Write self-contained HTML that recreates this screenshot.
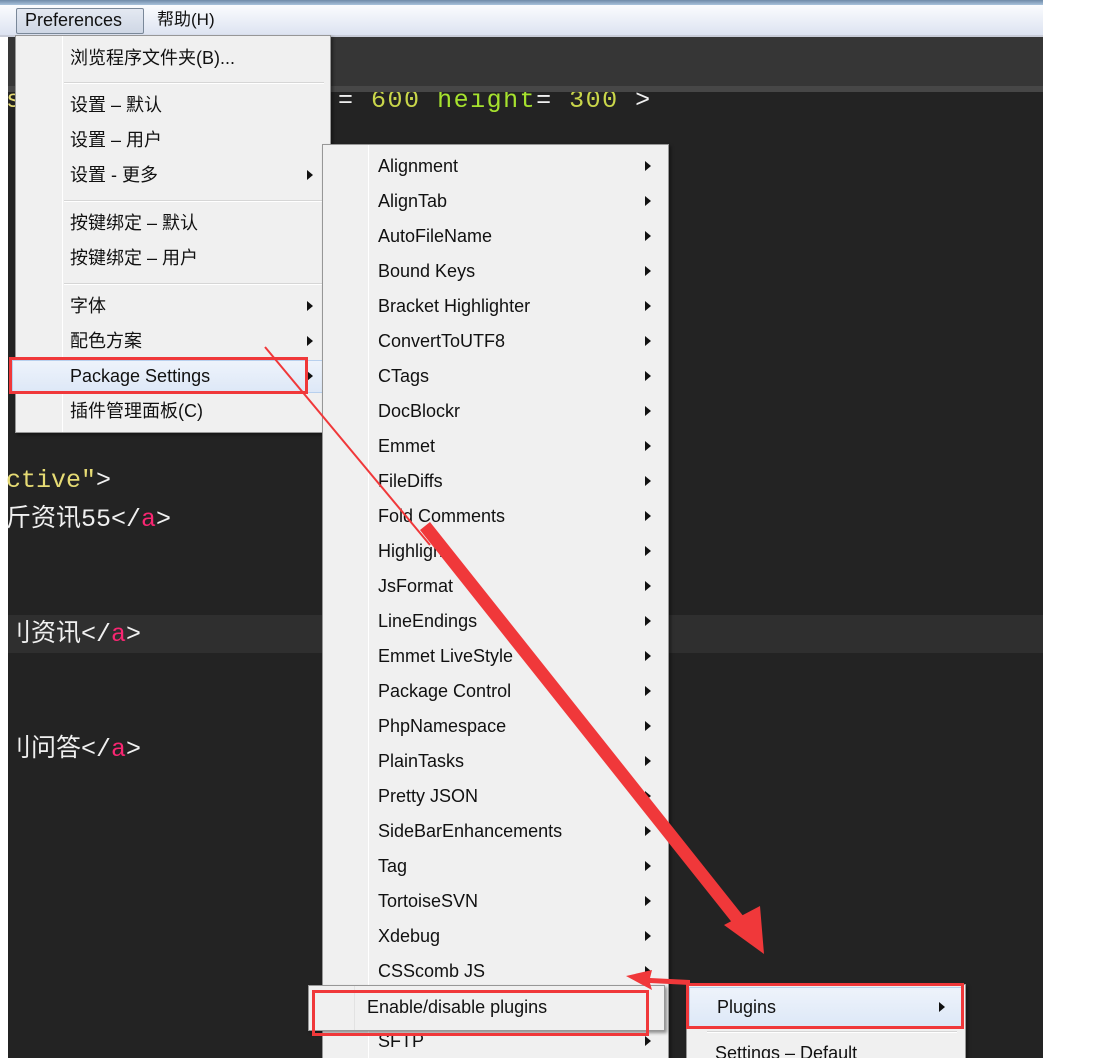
<!DOCTYPE html>
<html style="overflow:hidden;width:1098px;height:1058px"><head><meta charset="utf-8"><style>
*{margin:0;padding:0;box-sizing:border-box}
body{width:1098px;height:1058px;position:relative;overflow:hidden;background:#fff;font-family:"Liberation Sans","Noto Sans CJK SC",sans-serif}
.abs{position:absolute}
.menu{position:absolute;background:#f0f0f0;border:1px solid #979797;box-shadow:2px 2px 3px rgba(0,0,0,.4)}
.it{position:absolute;font-size:18px;color:#111;white-space:nowrap;line-height:20px}
.ar{position:absolute;width:0;height:0;border-left:6px solid #111;border-top:5px solid transparent;border-bottom:5px solid transparent}
.sep{position:absolute;height:2px;border-top:1px solid #d6d6d6;border-bottom:1px solid #fff}
.code{position:absolute;font-family:"Liberation Mono","Noto Sans CJK SC",monospace;font-size:25px;color:#f0f0f0;white-space:nowrap;line-height:30px}
.rb{position:absolute;border:3px solid #f0383a}
</style></head><body>
<div class="abs" style="left:0;top:0;width:1043px;height:5px;background:linear-gradient(#6f8aa8,#a9c3dc)"></div>
<div class="abs" style="left:0;top:5px;width:1043px;height:32px;background:linear-gradient(#fbfcfe,#dde3f1);border-bottom:2px solid #c8ccd8"></div>
<div class="abs" style="left:16px;top:8px;width:128px;height:26px;border:1px solid #7a8899;border-radius:2px;background:linear-gradient(#e4e9f2,#cfd7e5)"></div>
<div class="it" style="left:25px;top:10px;font-size:18px">Preferences</div>
<div class="it" style="left:157px;top:10px;font-size:17px">帮助(H)</div>
<div class="abs" style="left:8px;top:37px;width:1035px;height:50px;background:#363636"></div>
<div class="abs" style="left:8px;top:92px;width:1035px;height:966px;background:#232323"></div>
<div class="abs" style="left:8px;top:615px;width:1035px;height:38px;background:#2f2f2f"></div>
<div class="code" style="left:6px;top:86px;color:#e6db74">s</div>
<div class="code" style="left:338px;top:86px;letter-spacing:1.5px"><span>=</span> <span style="color:#c9d64a">600</span>  <span style="color:#a6e22e">height</span>= <span style="color:#c9d64a">300</span> &gt;</div>
<div class="abs" style="left:8px;top:86px;width:1035px;height:6px;background:#474747"></div>
<div class="code" style="left:6px;top:466px"><span style="color:#e6db74">ctive"</span>&gt;</div>
<div class="code" style="left:6px;top:505px">斤资讯55&lt;/<span style="color:#f92672">a</span>&gt;</div>
<div class="code" style="left:6px;top:620px">刂资讯&lt;/<span style="color:#f92672">a</span>&gt;</div>
<div class="code" style="left:6px;top:735px">刂问答&lt;/<span style="color:#f92672">a</span>&gt;</div>

<div class="menu" style="left:15px;top:35px;width:316px;height:398px">
 <div class="abs" style="left:46px;top:0;width:1px;height:396px;background:#e2e2e2;border-right:1px solid #fff"></div>
 <div class="it" style="left:54px;top:12px">浏览程序文件夹(B)...</div>
 <div class="sep" style="left:48px;top:46px;width:260px"></div>
 <div class="it" style="left:54px;top:59px">设置 – 默认</div>
 <div class="it" style="left:54px;top:94px">设置 – 用户</div>
 <div class="it" style="left:54px;top:129px">设置 - 更多</div><div class="ar" style="left:291px;top:134px"></div>
 <div class="sep" style="left:48px;top:164px;width:260px"></div>
 <div class="it" style="left:54px;top:177px">按键绑定 – 默认</div>
 <div class="it" style="left:54px;top:212px">按键绑定 – 用户</div>
 <div class="sep" style="left:48px;top:247px;width:260px"></div>
 <div class="it" style="left:54px;top:260px">字体</div><div class="ar" style="left:291px;top:265px"></div>
 <div class="it" style="left:54px;top:295px">配色方案</div><div class="ar" style="left:291px;top:300px"></div>
 <div class="abs" style="left:-4px;top:324px;width:318px;height:33px;background:linear-gradient(#eef3fb,#dde8f7);border:1px solid #b8d0ee"></div>
 <div class="it" style="left:54px;top:330px">Package Settings</div><div class="ar" style="left:291px;top:335px"></div>
 <div class="it" style="left:54px;top:365px">插件管理面板(C)</div>
</div>
<div class="rb" style="left:9px;top:357px;width:299px;height:37px"></div>

<div class="menu" style="left:322px;top:144px;width:347px;height:930px">
 <div class="abs" style="left:45px;top:0;width:1px;height:930px;background:#e2e2e2;border-right:1px solid #fff"></div>
 <div class="it" style="left:55px;top:11px">Alignment</div>
 <div class="it" style="left:55px;top:46px">AlignTab</div>
 <div class="it" style="left:55px;top:81px">AutoFileName</div>
 <div class="it" style="left:55px;top:116px">Bound Keys</div>
 <div class="it" style="left:55px;top:151px">Bracket Highlighter</div>
 <div class="it" style="left:55px;top:186px">ConvertToUTF8</div>
 <div class="it" style="left:55px;top:221px">CTags</div>
 <div class="it" style="left:55px;top:256px">DocBlockr</div>
 <div class="it" style="left:55px;top:291px">Emmet</div>
 <div class="it" style="left:55px;top:326px">FileDiffs</div>
 <div class="it" style="left:55px;top:361px">Fold Comments</div>
 <div class="it" style="left:55px;top:396px">Highlight</div>
 <div class="it" style="left:55px;top:431px">JsFormat</div>
 <div class="it" style="left:55px;top:466px">LineEndings</div>
 <div class="it" style="left:55px;top:501px">Emmet LiveStyle</div>
 <div class="it" style="left:55px;top:536px">Package Control</div>
 <div class="it" style="left:55px;top:571px">PhpNamespace</div>
 <div class="it" style="left:55px;top:606px">PlainTasks</div>
 <div class="it" style="left:55px;top:641px">Pretty JSON</div>
 <div class="it" style="left:55px;top:676px">SideBarEnhancements</div>
 <div class="it" style="left:55px;top:711px">Tag</div>
 <div class="it" style="left:55px;top:746px">TortoiseSVN</div>
 <div class="it" style="left:55px;top:781px">Xdebug</div>
 <div class="it" style="left:55px;top:816px">CSScomb JS</div>
 <div class="it" style="left:55px;top:886px">SFTP</div>
 <div class="ar" style="left:322px;top:16px"></div><div class="ar" style="left:322px;top:51px"></div><div class="ar" style="left:322px;top:86px"></div><div class="ar" style="left:322px;top:121px"></div><div class="ar" style="left:322px;top:156px"></div><div class="ar" style="left:322px;top:191px"></div><div class="ar" style="left:322px;top:226px"></div><div class="ar" style="left:322px;top:261px"></div><div class="ar" style="left:322px;top:296px"></div><div class="ar" style="left:322px;top:331px"></div><div class="ar" style="left:322px;top:366px"></div><div class="ar" style="left:322px;top:401px"></div><div class="ar" style="left:322px;top:436px"></div><div class="ar" style="left:322px;top:471px"></div><div class="ar" style="left:322px;top:506px"></div><div class="ar" style="left:322px;top:541px"></div><div class="ar" style="left:322px;top:576px"></div><div class="ar" style="left:322px;top:611px"></div><div class="ar" style="left:322px;top:646px"></div><div class="ar" style="left:322px;top:681px"></div><div class="ar" style="left:322px;top:716px"></div><div class="ar" style="left:322px;top:751px"></div><div class="ar" style="left:322px;top:786px"></div><div class="ar" style="left:322px;top:821px"></div><div class="ar" style="left:322px;top:891px"></div>
</div>

<div class="menu" style="left:308px;top:985px;width:357px;height:46px">
 <div class="abs" style="left:45px;top:0;width:1px;height:44px;background:#e2e2e2"></div>
 <div class="it" style="left:58px;top:11px">Enable/disable plugins</div>
</div>
<div class="rb" style="left:312px;top:990px;width:337px;height:46px"></div>

<div class="menu" style="left:686px;top:984px;width:280px;height:90px">
 <div class="abs" style="left:2px;top:2px;width:274px;height:40px;background:linear-gradient(#eef3fb,#dde8f7);border:1px solid #b8d0ee"></div>
 <div class="it" style="left:30px;top:12px">Plugins</div><div class="ar" style="left:252px;top:17px"></div>
 <div class="sep" style="left:20px;top:46px;width:250px"></div>
 <div class="it" style="left:28px;top:58px">Settings – Default</div>
</div>
<div class="rb" style="left:686px;top:983px;width:278px;height:46px"></div>

<svg class="abs" style="left:0;top:0" width="1098" height="1058">
 <line x1="265" y1="347" x2="430" y2="545" stroke="#f0383a" stroke-width="2"/>
 <polygon points="420,530 430,522 748,922 738,930" fill="#f0383a"/>
 <polygon points="724,925 760,906 764,954" fill="#f0383a"/>
 <polygon points="690,980 650,978 652,970 626,976 652,990 650,983 690,985" fill="#f0383a"/>
</svg>
</body></html>
